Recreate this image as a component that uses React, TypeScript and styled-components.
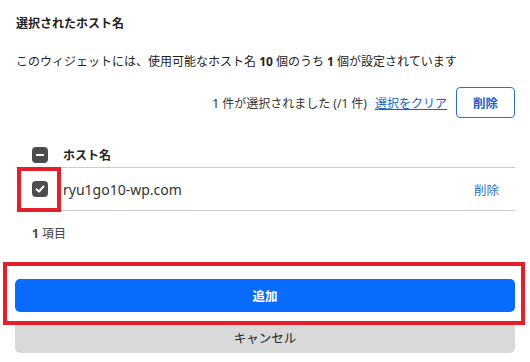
import React from "react";
import styled, { createGlobalStyle } from "styled-components";

const GlobalStyle = createGlobalStyle`
  html, body {
    margin: 0;
    padding: 0;
    background: #ffffff;
  }
  body {
    font-family: "Noto Sans", "Noto Sans CJK JP", sans-serif;
    color: #222222;
  }
`;

const Panel = styled.div`
  width: 530px;
  height: 362px;
  box-sizing: border-box;
  padding: 14px 15px 0 16px;
  display: flex;
  flex-direction: column;
  overflow: hidden;
`;

const Title = styled.h2`
  margin: 0;
  font-size: 12px;
  line-height: 20px;
  font-weight: 600;
`;

const Description = styled.p`
  margin: 18px 0 0;
  font-size: 12px;
  line-height: 20px;

  b {
    font-weight: 700;
  }
`;

const ActionBar = styled.div`
  margin-top: 15px;
  display: flex;
  justify-content: flex-end;
  align-items: center;
  gap: 8px;
  font-size: 12px;
  color: #333333;
`;

const ClearLink = styled.a`
  color: #1a62c9;
  text-decoration: underline;
  cursor: pointer;
`;

const OutlineButton = styled.button`
  margin-left: 1px;
  width: 59px;
  height: 31px;
  border: 1px solid #2d6fd0;
  border-radius: 4px;
  background: #ffffff;
  color: #1a62c9;
  font-family: inherit;
  font-size: 12.5px;
  font-weight: 600;
`;

const Table = styled.div`
  margin-top: 21px;
  display: flex;
  flex-direction: column;
`;

const Row = styled.div<{ $head?: boolean }>`
  display: flex;
  align-items: center;
  box-sizing: border-box;
  height: ${(p) => (p.$head ? "29px" : "43px")};
  padding-top: ${(p) => (p.$head ? "4px" : "0")};
  border-bottom: 1px solid #cccccc;
`;

const CheckCell = styled.div<{ $marked?: boolean }>`
  position: relative;
  width: 47px;
  height: 100%;
  box-sizing: border-box;
  padding-left: 16px;
  display: flex;
  align-items: center;

  &::after {
    content: "";
    display: ${(p) => (p.$marked ? "block" : "none")};
    position: absolute;
    left: 1px;
    top: -1px;
    width: 44px;
    height: 45px;
    box-sizing: border-box;
    border: 4px solid #e21f2a;
  }
`;

const Box = styled.span`
  width: 16px;
  height: 16px;
  border-radius: 4px;
  background: #4d4d4d;
  display: flex;
  align-items: center;
  justify-content: center;
`;

const HeadLabel = styled.span`
  font-size: 12px;
  font-weight: 700;
  flex: 1;
`;

const HostName = styled.span`
  font-size: 14px;
  flex: 1;
  color: #333333;
`;

const RowAction = styled.a`
  margin-right: 16px;
  font-size: 12.5px;
  color: #2d6fc4;
  cursor: pointer;
`;

const Count = styled.div`
  margin-top: 13px;
  padding-left: 16px;
  font-size: 12px;
  line-height: 20px;
  color: #444444;

  b {
    font-weight: 700;
  }
`;

const Buttons = styled.div`
  margin-top: 35px;
  display: flex;
  flex-direction: column;
  gap: 10px;
  margin-left: -1px;
`;

const Focus = styled.div`
  position: relative;

  &::after {
    content: "";
    position: absolute;
    left: -12px;
    right: -10px;
    top: -17px;
    bottom: -13px;
    border: 4px solid #e21f2a;
  }
`;

const Button = styled.button<{ $primary?: boolean }>`
  width: 500px;
  height: ${(p) => (p.$primary ? "33px" : "31px")};
  border: none;
  border-radius: 5px;
  background: ${(p) => (p.$primary ? "#0a6cff" : "#d9d9d9")};
  color: ${(p) => (p.$primary ? "#ffffff" : "#222222")};
  font-family: inherit;
  font-size: 12.5px;
  font-weight: ${(p) => (p.$primary ? 700 : 400)};
`;

const Indeterminate = () => (
  <Box>
    <svg width="10" height="10" viewBox="0 0 10 10">
      <rect x="1" y="4" width="8" height="2" fill="#ffffff" />
    </svg>
  </Box>
);

const Checked = () => (
  <Box>
    <svg width="10" height="10" viewBox="0 0 10 10">
      <path
        d="M1.5 5.2 L4 7.5 L8.5 2.5"
        stroke="#ffffff"
        strokeWidth="2"
        fill="none"
        strokeLinecap="round"
        strokeLinejoin="round"
      />
    </svg>
  </Box>
);

const hosts = ["ryu1go10-wp.com"];

const App = () => (
  <>
    <GlobalStyle />
    <Panel>
      <Title>選択されたホスト名</Title>
      <Description>
        このウィジェットには、使用可能なホスト名 <b>10</b> 個のうち <b>1</b> 個が設定されています
      </Description>
      <ActionBar>
        <span>1 件が選択されました (/1 件)</span>
        <ClearLink>選択をクリア</ClearLink>
        <OutlineButton>削除</OutlineButton>
      </ActionBar>
      <Table>
        <Row $head>
          <CheckCell>
            <Indeterminate />
          </CheckCell>
          <HeadLabel>ホスト名</HeadLabel>
        </Row>
        {hosts.map((host) => (
          <Row key={host}>
            <CheckCell $marked>
              <Checked />
            </CheckCell>
            <HostName>{host}</HostName>
            <RowAction>削除</RowAction>
          </Row>
        ))}
      </Table>
      <Count>
        <b>1</b> 項目
      </Count>
      <Buttons>
        <Focus>
          <Button $primary>追加</Button>
        </Focus>
        <Button>キャンセル</Button>
      </Buttons>
    </Panel>
  </>
);

export default App;
